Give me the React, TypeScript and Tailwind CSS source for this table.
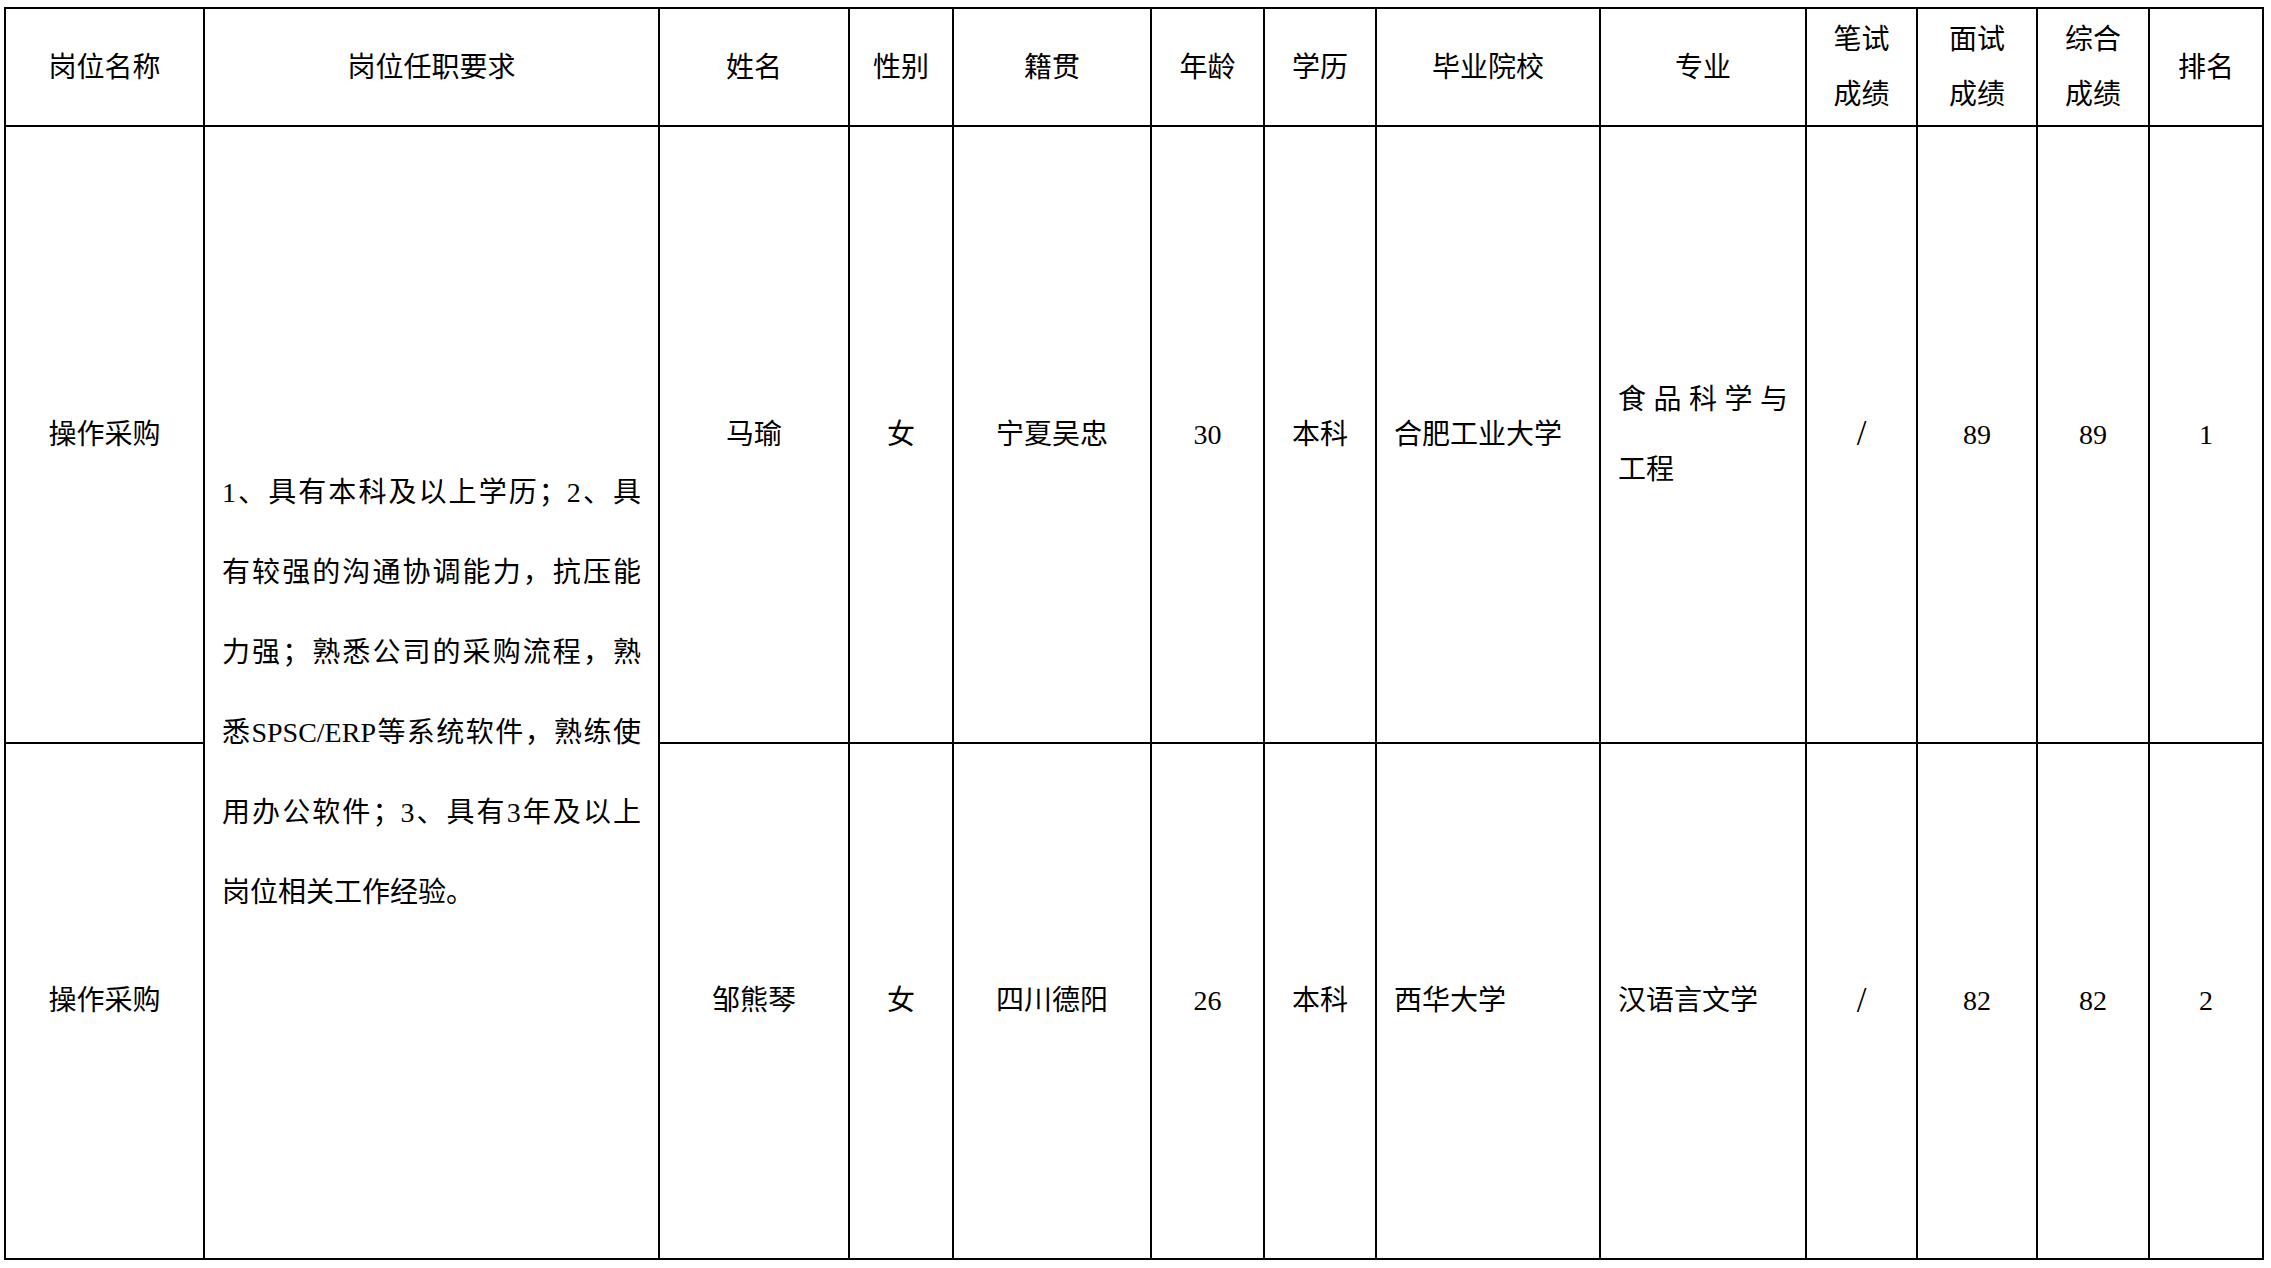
const widths = [
  "w-[199px]",
  "w-[455px]",
  "w-[190px]",
  "w-[104px]",
  "w-[198px]",
  "w-[113px]",
  "w-[112px]",
  "w-[224px]",
  "w-[206px]",
  "w-[111px]",
  "w-[120px]",
  "w-[112px]",
  "w-[114px]",
];

type Row = {
  name: string;
  gender: string;
  origin: string;
  age: string;
  degree: string;
  school: string;
  major: string[];
  written: string;
  interview: string;
  total: string;
  rank: string;
  height: string;
};

const rows: Row[] = [
  {
    name: "马瑜",
    gender: "女",
    origin: "宁夏吴忠",
    age: "30",
    degree: "本科",
    school: "合肥工业大学",
    major: ["食品科学与", "工程"],
    written: "/",
    interview: "89",
    total: "89",
    rank: "1",
    height: "h-[617px]",
  },
  {
    name: "邹熊琴",
    gender: "女",
    origin: "四川德阳",
    age: "26",
    degree: "本科",
    school: "西华大学",
    major: ["汉语言文学"],
    written: "/",
    interview: "82",
    total: "82",
    rank: "2",
    height: "h-[516px]",
  },
];

const requirement = [
  "1、具有本科及以上学历；2、具",
  "有较强的沟通协调能力，抗压能",
  "力强；熟悉公司的采购流程，熟",
  "悉SPSC/ERP等系统软件，熟练使",
  "用办公软件；3、具有3年及以上",
];

const cell = "border-2 border-black align-middle p-0";

function Head({ lines }: { lines: string[] }) {
  return (
    <th className={`${cell} text-center font-normal leading-[55px]`}>
      {lines.map((l) => (
        <div key={l}>{l}</div>
      ))}
    </th>
  );
}

export default function App() {
  return (
    <div
      className="min-h-screen bg-white text-black text-[28px]"
      style={{ fontFamily: '"Liberation Serif", "Noto Sans CJK SC", serif' }}
    >
      <div className="pl-[4px] pt-[7px]">
        <table className="table-fixed border-collapse w-[2260px]">
          <colgroup>
            {widths.map((w, i) => (
              <col key={i} className={w} />
            ))}
          </colgroup>
          <thead>
            <tr className="h-[118px]">
              <Head lines={["岗位名称"]} />
              <Head lines={["岗位任职要求"]} />
              <Head lines={["姓名"]} />
              <Head lines={["性别"]} />
              <Head lines={["籍贯"]} />
              <Head lines={["年龄"]} />
              <Head lines={["学历"]} />
              <Head lines={["毕业院校"]} />
              <Head lines={["专业"]} />
              <Head lines={["笔试", "成绩"]} />
              <Head lines={["面试", "成绩"]} />
              <Head lines={["综合", "成绩"]} />
              <Head lines={["排名"]} />
            </tr>
          </thead>
          <tbody>
            {rows.map((r, idx) => (
              <tr key={r.name} className={r.height}>
                <td className={`${cell} text-center`}>操作采购</td>
                {idx === 0 && (
                  <td rowSpan={2} className={`${cell} px-[17px]`}>
                    <div className="leading-[80px]">
                      {requirement.map((line) => (
                        <div
                          key={line}
                          className="text-justify [text-align-last:justify]"
                        >
                          {line}
                        </div>
                      ))}
                      <div>岗位相关工作经验。</div>
                    </div>
                  </td>
                )}
                <td className={`${cell} text-center`}>{r.name}</td>
                <td className={`${cell} text-center`}>{r.gender}</td>
                <td className={`${cell} text-center`}>{r.origin}</td>
                <td className={`${cell} text-center`}>{r.age}</td>
                <td className={`${cell} text-center`}>{r.degree}</td>
                <td className={`${cell} text-left pl-[17px]`}>{r.school}</td>
                <td className={`${cell} text-left px-[17px]`}>
                  <div className="leading-[70px]">
                    {r.major.map((m, i) => (
                      <div
                        key={m}
                        className={
                          i === 0 && r.major.length > 1
                            ? "text-justify [text-align-last:justify]"
                            : ""
                        }
                      >
                        {m}
                      </div>
                    ))}
                  </div>
                </td>
                <td className={`${cell} text-center text-[35px] font-light`}>
                  {r.written}
                </td>
                <td className={`${cell} text-center`}>{r.interview}</td>
                <td className={`${cell} text-center`}>{r.total}</td>
                <td className={`${cell} text-center`}>{r.rank}</td>
              </tr>
            ))}
          </tbody>
        </table>
      </div>
    </div>
  );
}
